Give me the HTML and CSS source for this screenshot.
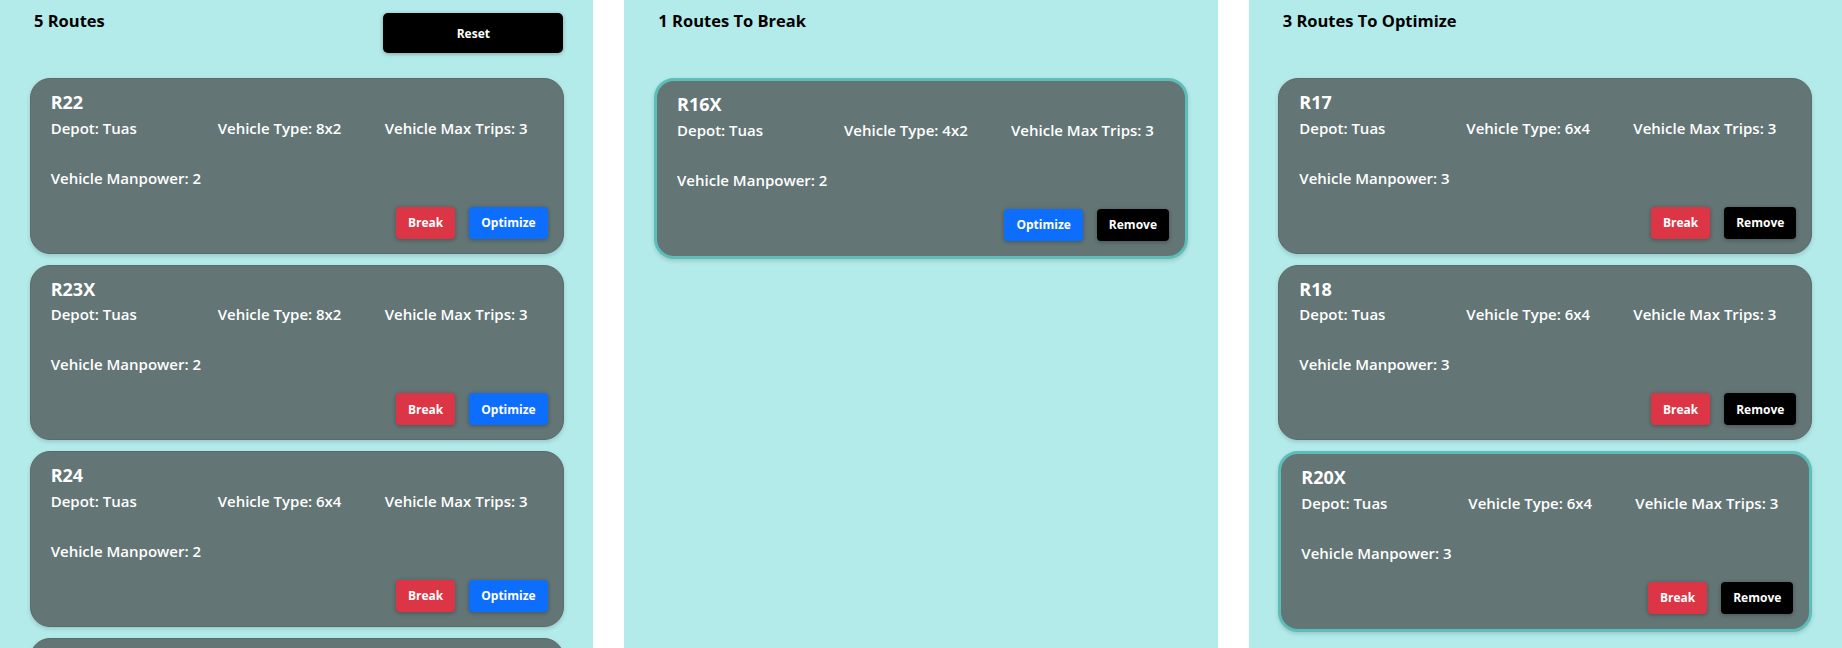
FILE: index.html
```html
<!DOCTYPE html>
<html lang="en">
<head>
<meta charset="utf-8">
<title>Routes</title>
<link rel="stylesheet" href="styles.css">
</head>
<body>
<div class="board">
  <section class="panel">
    <div class="panel-head">
      <h2 class="panel-title">5 Routes</h2>
      <button class="btn btn-reset">Reset</button>
    </div>
    <div class="cards">
      <div class="card">
        <h3 class="card-title">R22</h3>
        <div class="details">
          <span>Depot: Tuas</span><span>Vehicle Type: 8x2</span><span>Vehicle Max Trips: 3</span>
          <span>Vehicle Manpower: 2</span>
        </div>
        <div class="actions"><button class="btn btn-break">Break</button><button class="btn btn-opt">Optimize</button></div>
      </div>
      <div class="card">
        <h3 class="card-title">R23X</h3>
        <div class="details">
          <span>Depot: Tuas</span><span>Vehicle Type: 8x2</span><span>Vehicle Max Trips: 3</span>
          <span>Vehicle Manpower: 2</span>
        </div>
        <div class="actions"><button class="btn btn-break">Break</button><button class="btn btn-opt">Optimize</button></div>
      </div>
      <div class="card">
        <h3 class="card-title">R24</h3>
        <div class="details">
          <span>Depot: Tuas</span><span>Vehicle Type: 6x4</span><span>Vehicle Max Trips: 3</span>
          <span>Vehicle Manpower: 2</span>
        </div>
        <div class="actions"><button class="btn btn-break">Break</button><button class="btn btn-opt">Optimize</button></div>
      </div>
      <div class="card">
        <h3 class="card-title">R25</h3>
        <div class="details">
          <span>Depot: Tuas</span><span>Vehicle Type: 6x4</span><span>Vehicle Max Trips: 3</span>
          <span>Vehicle Manpower: 2</span>
        </div>
        <div class="actions"><button class="btn btn-break">Break</button><button class="btn btn-opt">Optimize</button></div>
      </div>
    </div>
  </section>

  <section class="panel">
    <div class="panel-head">
      <h2 class="panel-title">1 Routes To Break</h2>
    </div>
    <div class="cards">
      <div class="card card-selected">
        <h3 class="card-title">R16X</h3>
        <div class="details">
          <span>Depot: Tuas</span><span>Vehicle Type: 4x2</span><span>Vehicle Max Trips: 3</span>
          <span>Vehicle Manpower: 2</span>
        </div>
        <div class="actions"><button class="btn btn-opt">Optimize</button><button class="btn btn-remove">Remove</button></div>
      </div>
    </div>
  </section>

  <section class="panel">
    <div class="panel-head">
      <h2 class="panel-title">3 Routes To Optimize</h2>
    </div>
    <div class="cards">
      <div class="card">
        <h3 class="card-title">R17</h3>
        <div class="details">
          <span>Depot: Tuas</span><span>Vehicle Type: 6x4</span><span>Vehicle Max Trips: 3</span>
          <span>Vehicle Manpower: 3</span>
        </div>
        <div class="actions"><button class="btn btn-break">Break</button><button class="btn btn-remove">Remove</button></div>
      </div>
      <div class="card">
        <h3 class="card-title">R18</h3>
        <div class="details">
          <span>Depot: Tuas</span><span>Vehicle Type: 6x4</span><span>Vehicle Max Trips: 3</span>
          <span>Vehicle Manpower: 3</span>
        </div>
        <div class="actions"><button class="btn btn-break">Break</button><button class="btn btn-remove">Remove</button></div>
      </div>
      <div class="card card-selected">
        <h3 class="card-title">R20X</h3>
        <div class="details">
          <span>Depot: Tuas</span><span>Vehicle Type: 6x4</span><span>Vehicle Max Trips: 3</span>
          <span>Vehicle Manpower: 3</span>
        </div>
        <div class="actions"><button class="btn btn-break">Break</button><button class="btn btn-remove">Remove</button></div>
      </div>
    </div>
  </section>
</div>
</body>
</html>
```

FILE: styles.css
```css
html, body {
  margin: 0;
  padding: 0;
  background: #ffffff;
}

body {
  font-family: "Open Sans", "Noto Sans", sans-serif;
  color: #000;
}

.board {
  display: grid;
  grid-template-columns: repeat(3, 1fr);
  column-gap: 31px;
  height: 648px;
  overflow: hidden;
}

.panel {
  background: #b3ebea;
  min-height: 648px;
}

.panel-head {
  display: flex;
  justify-content: space-between;
  align-items: flex-start;
  height: 78px;
  padding: 0 30px 0 34px;
  box-sizing: border-box;
}

.panel-title {
  margin: 11px 0 0;
  font-size: 16.5px;
  font-weight: 700;
  line-height: 1.2;
}

.btn {
  font-family: "Open Sans", "Noto Sans", sans-serif;
  font-weight: 700;
  font-size: 12px;
  color: #fff;
  border: none;
  border-radius: 4px;
  height: 32px;
  padding: 0 12px;
  cursor: pointer;
  box-shadow: 0 1px 4px rgba(0, 0, 0, 0.3);
}

.btn-reset {
  margin-top: 13px;
  width: 180px;
  height: 40px;
  background: #000;
  border-radius: 5px;
}

.btn-break { background: #dc3545; }
.btn-opt { background: #0d6efd; }
.btn-remove { background: #000; }

.cards {
  display: flex;
  flex-direction: column;
  align-items: center;
  gap: 11px;
}

.card {
  width: 90%;
  box-sizing: border-box;
  background: #637575;
  border: 1px solid #5a6b6b;
  border-radius: 20px;
  padding: 13px 15px 14px 20px;
  color: #fff;
  box-shadow: 0 2px 4px rgba(0, 0, 0, 0.15);
}

.card-selected {
  border: 3px solid #5dbdb8;
  padding: 13px 16px 15px 20px;
}

.card-title {
  margin: 0 0 2px;
  font-size: 18px;
  font-weight: 700;
  line-height: 1.2;
}

.details {
  display: grid;
  grid-template-columns: 167px 167px 167px;
  row-gap: 26px;
  font-size: 15px;
  font-weight: 600;
  line-height: 24px;
}

.actions {
  display: flex;
  justify-content: flex-end;
  gap: 14px;
  margin-top: 17px;
}
```
